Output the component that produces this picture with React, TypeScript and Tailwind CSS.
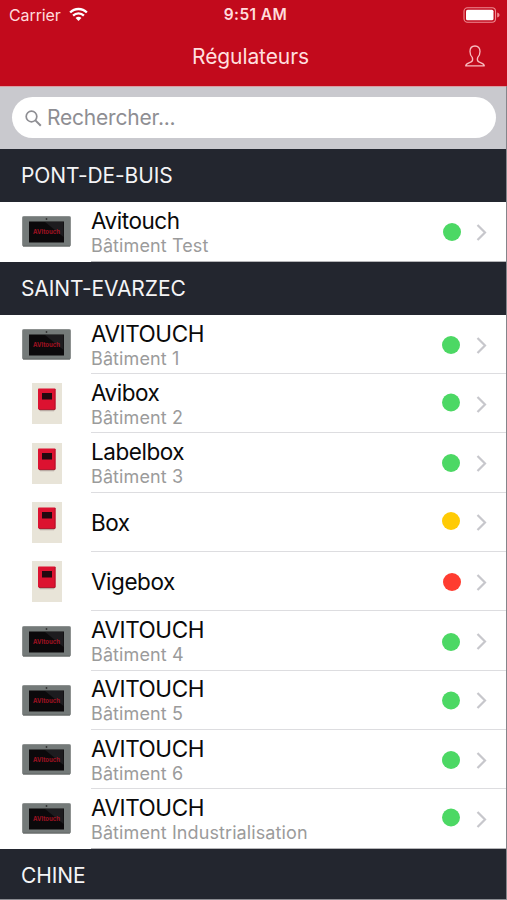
import { useState } from "react";

type Device = "touch" | "box";
type Status = "online" | "warning" | "offline";

interface Regulator {
  name: string;
  building?: string;
  device: Device;
  status: Status;
  // small shift of the status dot inside its cell
  dotClass?: string;
}

interface Site {
  title: string;
  regulators: Regulator[];
}

const sites: Site[] = [
  {
    title: "PONT-DE-BUIS",
    regulators: [
      { name: "Avitouch", building: "Bâtiment Test", device: "touch", status: "online", dotClass: "translate-x-[1px]" },
    ],
  },
  {
    title: "SAINT-EVARZEC",
    regulators: [
      { name: "AVITOUCH", building: "Bâtiment 1", device: "touch", status: "online" },
      { name: "Avibox", building: "Bâtiment 2", device: "box", status: "online", dotClass: "-translate-y-[1.5px]" },
      { name: "Labelbox", building: "Bâtiment 3", device: "box", status: "online" },
      { name: "Box", device: "box", status: "warning", dotClass: "-translate-y-[1px]" },
      { name: "Vigebox", device: "box", status: "offline", dotClass: "translate-x-[1px]" },
      { name: "AVITOUCH", building: "Bâtiment 4", device: "touch", status: "online", dotClass: "translate-y-[1px]" },
      { name: "AVITOUCH", building: "Bâtiment 5", device: "touch", status: "online", dotClass: "translate-y-[0.5px]" },
      { name: "AVITOUCH", building: "Bâtiment 6", device: "touch", status: "online" },
      { name: "AVITOUCH", building: "Bâtiment Industrialisation", device: "touch", status: "online", dotClass: "-translate-y-[1.5px]" },
    ],
  },
];

const statusColors: Record<Status, string> = {
  online: "bg-[#4cd864]",
  warning: "bg-[#ffcb05]",
  offline: "bg-[#ff3c30]",
};

function StatusBar() {
  return (
    <div className="grid h-[29px] grid-cols-3 items-center pt-[1px] text-[16px] leading-[20px] text-[#ffdcdc]">
      <div className="flex items-center gap-[8px] pl-[9px]">
        <span className="tracking-[-0.1px]">Carrier</span>
        <svg className="mb-[2px] h-[15px] w-[19px]" viewBox="0 0 20 15" fill="none">
          <path d="M1.2 5.4a12.4 12.4 0 0 1 17.6 0" stroke="#fff" strokeWidth="2.5" />
          <path d="M4.3 8.7a8 8 0 0 1 11.4 0" stroke="#fff" strokeWidth="2.4" />
          <path d="M6.9 11.3a4.4 4.4 0 0 1 6.2 0L10 14.4Z" fill="#fff" />
        </svg>
      </div>
      <span className="pl-[4px] text-center text-[15.5px] font-semibold tracking-[0.4px] whitespace-nowrap">
        9:51 AM
      </span>
      <div className="flex justify-end pr-[7px]">
        <svg className="h-[16px] w-[37px]" viewBox="0 0 37 16" fill="none">
          <rect x="1" y="0.8" width="31.5" height="14.4" rx="3.5" stroke="#ee8c92" strokeWidth="1.1" />
          <rect x="3" y="2.7" width="27.5" height="10.6" rx="1.6" fill="#fff" />
          <path d="M34.2 5.4c1.6.6 2.3 1.5 2.3 2.6s-.7 2-2.3 2.6Z" fill="#ee8c92" />
        </svg>
      </div>
    </div>
  );
}

function NavBar() {
  return (
    <div className="grid h-[57px] grid-cols-[60px_1fr_60px] items-center">
      <div />
      <h1 className="pr-[6px] pb-[2px] text-center text-[21px] leading-[28px] tracking-[-0.1px] text-[#ffdfdf]">
        Régulateurs
      </h1>
      <button className="flex justify-end pr-[21px] pb-[3px]" aria-label="Compte">
        <svg className="h-[22px] w-[22px]" viewBox="0 0 22 22" fill="none" stroke="#f8bcbf" strokeWidth="1.3" strokeLinejoin="round">
          <path d="M11 1C7.700 1 6 3.200 6 6.500c0 2.600.9 4.600 2.300 6 .7 2.200.4 3.700-1.100 4.400-2.400 1.100-5 1.300-5.500 3.900h18.600c-.5-2.600-3.100-2.800-5.500-3.900-1.500-.7-1.800-2.200-1.100-4.400 1.400-1.400 2.300-3.400 2.300-6C16 3.200 14.300 1 11 1Z" />
        </svg>
      </button>
    </div>
  );
}

function SearchBar() {
  const [query, setQuery] = useState("");

  return (
    <div className="h-[63px] border-t border-[#d99da3] bg-[#c9c9ce] pt-[10px] pr-[10px] pl-[12px]">
      <label className="flex h-[41px] items-center rounded-full bg-white pl-[13px]">
        <svg className="mt-[1px] h-[17px] w-[17px] shrink-0" viewBox="0 0 17 17" fill="none" stroke="#8e8e93" strokeWidth="1.7">
          <circle cx="6.500" cy="6.500" r="5.300" />
          <path d="m10.400 10.400 5.400 5.400" strokeWidth="2" />
        </svg>
        <input
          value={query}
          onChange={(e) => setQuery(e.target.value)}
          placeholder="Rechercher..."
          className="ml-[5px] w-full bg-transparent text-[21px] leading-[28px] tracking-[-0.2px] outline-none placeholder:text-[#8e8e93]"
        />
      </label>
    </div>
  );
}

function TouchThumbnail() {
  return (
    <svg className="h-[31px] w-[49px]" viewBox="0 0 49 31">
      <rect x="0.500" y="0.500" width="48" height="29.500" rx="1" fill="#747a79" stroke="#8d9190" />
      <path d="M1 30h47" stroke="#565b5a" />
      <rect x="7" y="5.500" width="35" height="21" fill="#0b090b" />
      <path d="M23 6h18.500v15Z" fill="#1d1c1f" />
      <circle cx="24.500" cy="3" r="0.900" fill="#333" />
      <text x="24.500" y="18.300" textAnchor="middle" fontSize="6.800" fontWeight="700" textLength="27" lengthAdjust="spacingAndGlyphs" fill="#a01222">
        AVItouch
      </text>
    </svg>
  );
}

function BoxThumbnail() {
  return (
    <svg className="h-[41px] w-[30px]" viewBox="0 0 30 41">
      <rect width="30" height="41" fill="#e8e4d8" />
      <path d="M7 26.500h16l-1 1.700H8Z" fill="#b9a9a2" />
      <rect x="6" y="5.500" width="17.500" height="21" rx="0.800" fill="#dc1230" />
      <path d="M23 6v20.500H7" fill="none" stroke="#ae1128" strokeWidth="0.900" />
      <rect x="10" y="10" width="10" height="6.500" fill="#220910" />
    </svg>
  );
}

function RegulatorRow({ regulator, last }: { regulator: Regulator; last: boolean }) {
  return (
    <li className="flex h-[59.3px] items-center bg-white">
      <div className="flex w-[91px] shrink-0 justify-center pr-[1px] pl-[3px]">
        {regulator.device === "touch" ? <TouchThumbnail /> : <BoxThumbnail />}
      </div>
      <div className={`flex h-full flex-1 items-center border-b ${last ? "border-[#b5b5b8]" : "border-[#dddde0]"}`}>
        <div className={`flex-1 whitespace-nowrap ${regulator.building ? "pt-[3px]" : "pt-[2px]"}`}>
          <div className="text-[22.5px] leading-[26px] tracking-[-0.45px] text-[#0a0a0a]">{regulator.name}</div>
          {regulator.building && (
            <div className="text-[18px] leading-[24px] tracking-[0.1px] text-[#9b9b9b]">{regulator.building}</div>
          )}
        </div>
        <span className={`mt-[1px] mr-[15.5px] h-[18px] w-[18px] rounded-full ${statusColors[regulator.status]} ${regulator.dotClass ?? ""}`} />
        <svg className="mt-[2px] mr-[19.5px] h-[17px] w-[11px]" viewBox="0 0 11 17" fill="none" stroke="#c7c7cc" strokeWidth="2.200">
          <path d="m1.500 1 7.500 7.500L1.500 16" />
        </svg>
      </div>
    </li>
  );
}

function SectionHeader({ title }: { title: string }) {
  return (
    <h2 className="flex h-[53.3px] items-center bg-[#23262f] pt-[1px] pl-[21px] text-[21px] leading-[28px] tracking-[-0.1px] text-[#f4f4f6]">
      {title}
    </h2>
  );
}

export default function App() {
  return (
    <div className="flex h-[900px] w-[507px] flex-col overflow-hidden border-b border-[#8b8c92] bg-white font-['Inter','Liberation_Sans',sans-serif]">
      <header className="h-[86px] shrink-0 bg-[#c20a1c]">
        <StatusBar />
        <NavBar />
      </header>
      <main className="border-r border-[#85858a]">
        <SearchBar />
        {sites.map((site) => (
          <section key={site.title}>
            <SectionHeader title={site.title} />
            <ul>
              {site.regulators.map((regulator, i) => (
                <RegulatorRow key={i} regulator={regulator} last={i === site.regulators.length - 1} />
              ))}
            </ul>
          </section>
        ))}
        <SectionHeader title="CHINE" />
      </main>
    </div>
  );
}
